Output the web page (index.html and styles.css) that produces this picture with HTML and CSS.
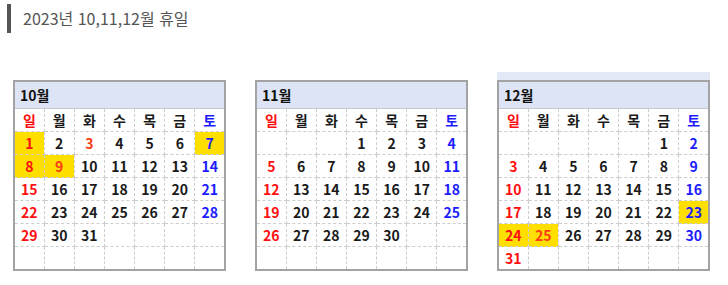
FILE: index.html
```html
<!DOCTYPE html>
<html lang="ko">
<head>
  <meta charset="UTF-8" />
  <meta name="viewport" content="width=device-width, initial-scale=1.0" />
  <title>2023년 10,11,12월 휴일</title>
  <link rel="stylesheet" href="styles.css">
</head>
<body>
  <h2 class="title">2023년 10,11,12월 휴일</h2>

  <div class="months" id="months"></div>

  <script>
    const monthsBox = document.getElementById("months");
    const dayNames = ["일", "월", "화", "수", "목", "금", "토"];

    // start = weekday of the 1st (0 = 일)
    const months = [
      { month: 10, start: 0, days: 31, off: [1, 7, 8, 9], holiday: [3, 9] },
      { month: 11, start: 3, days: 30, off: [], holiday: [] },
      { month: 12, start: 5, days: 31, off: [23, 24, 25], holiday: [25], cap: true }
    ];

    function cell(tag, text, classes) {
      const el = document.createElement(tag);
      el.textContent = text;
      classes.forEach(c => el.classList.add(c));
      return el;
    }

    function weekClass(col) {
      if (col === 0) return "sun";
      if (col === 6) return "sat";
      return "";
    }

    months.forEach(m => {
      const box = document.createElement("div");
      box.classList.add("month");

      const cap = document.createElement("div");
      cap.classList.add("cap");
      if (m.cap) cap.classList.add("on");
      box.appendChild(cap);

      const table = document.createElement("table");
      table.classList.add("cal");

      const head = document.createElement("tr");
      const th = cell("th", m.month + "월", ["cal-head"]);
      th.colSpan = 7;
      head.appendChild(th);
      table.appendChild(head);

      const names = document.createElement("tr");
      names.classList.add("names");
      dayNames.forEach((n, i) => {
        names.appendChild(cell("td", n, [weekClass(i)].filter(Boolean)));
      });
      table.appendChild(names);

      let day = 1 - m.start;
      for (let r = 0; r < 6; r++) {
        const row = document.createElement("tr");
        row.classList.add("week");
        for (let c = 0; c < 7; c++) {
          const cls = [];
          let text = "";
          if (day >= 1 && day <= m.days) {
            text = day;
            if (weekClass(c)) cls.push(weekClass(c));
            if (m.holiday.includes(day)) cls.push("holiday");
            if (m.off.includes(day)) cls.push("off");
          }
          row.appendChild(cell("td", text, cls));
          day++;
        }
        table.appendChild(row);
      }

      box.appendChild(table);
      monthsBox.appendChild(box);
    });
  </script>
</body>
</html>
```

FILE: styles.css
```css
body {
  margin: 0;
  font-family: "Noto Sans CJK KR", "Noto Sans", sans-serif;
  background: #fff;
  color: #222;
}

.title {
  margin: 4px 0 0 7px;
  padding-left: 12px;
  height: 29px;
  line-height: 29px;
  border-left: 4px solid #555;
  font-size: 16px;
  font-weight: 400;
  color: #555;
}

.months {
  display: flex;
  gap: 29px;
  margin: 39px 0 0 13px;
}

.month {
  width: 213px;
}

.cap {
  height: 8px;
}

.cap.on {
  background: #e3e8f7;
}

.cal {
  width: 100%;
  table-layout: fixed;
  border-collapse: collapse;
  border: 2px solid #a3a3a3;
  font-size: 14px;
  font-weight: 700;
}

.cal-head {
  height: 26px;
  padding: 0 0 0 5px;
  text-align: left;
  background: #dde4f6;
  border-bottom: 1px solid #c4c8d2;
  color: #111;
}

.cal td {
  padding: 0;
  text-align: center;
  border: 1px dashed #cdcdcd;
  color: #1a1a1a;
}

.names td {
  height: 22px;
}

.week td {
  height: 22px;
}

.cal .sun {
  color: #ff1010;
}

.cal .sat {
  color: #1c1cff;
}

.cal .holiday {
  color: #ff3c14;
}

.cal .off {
  background: #ffdf00;
}
```
